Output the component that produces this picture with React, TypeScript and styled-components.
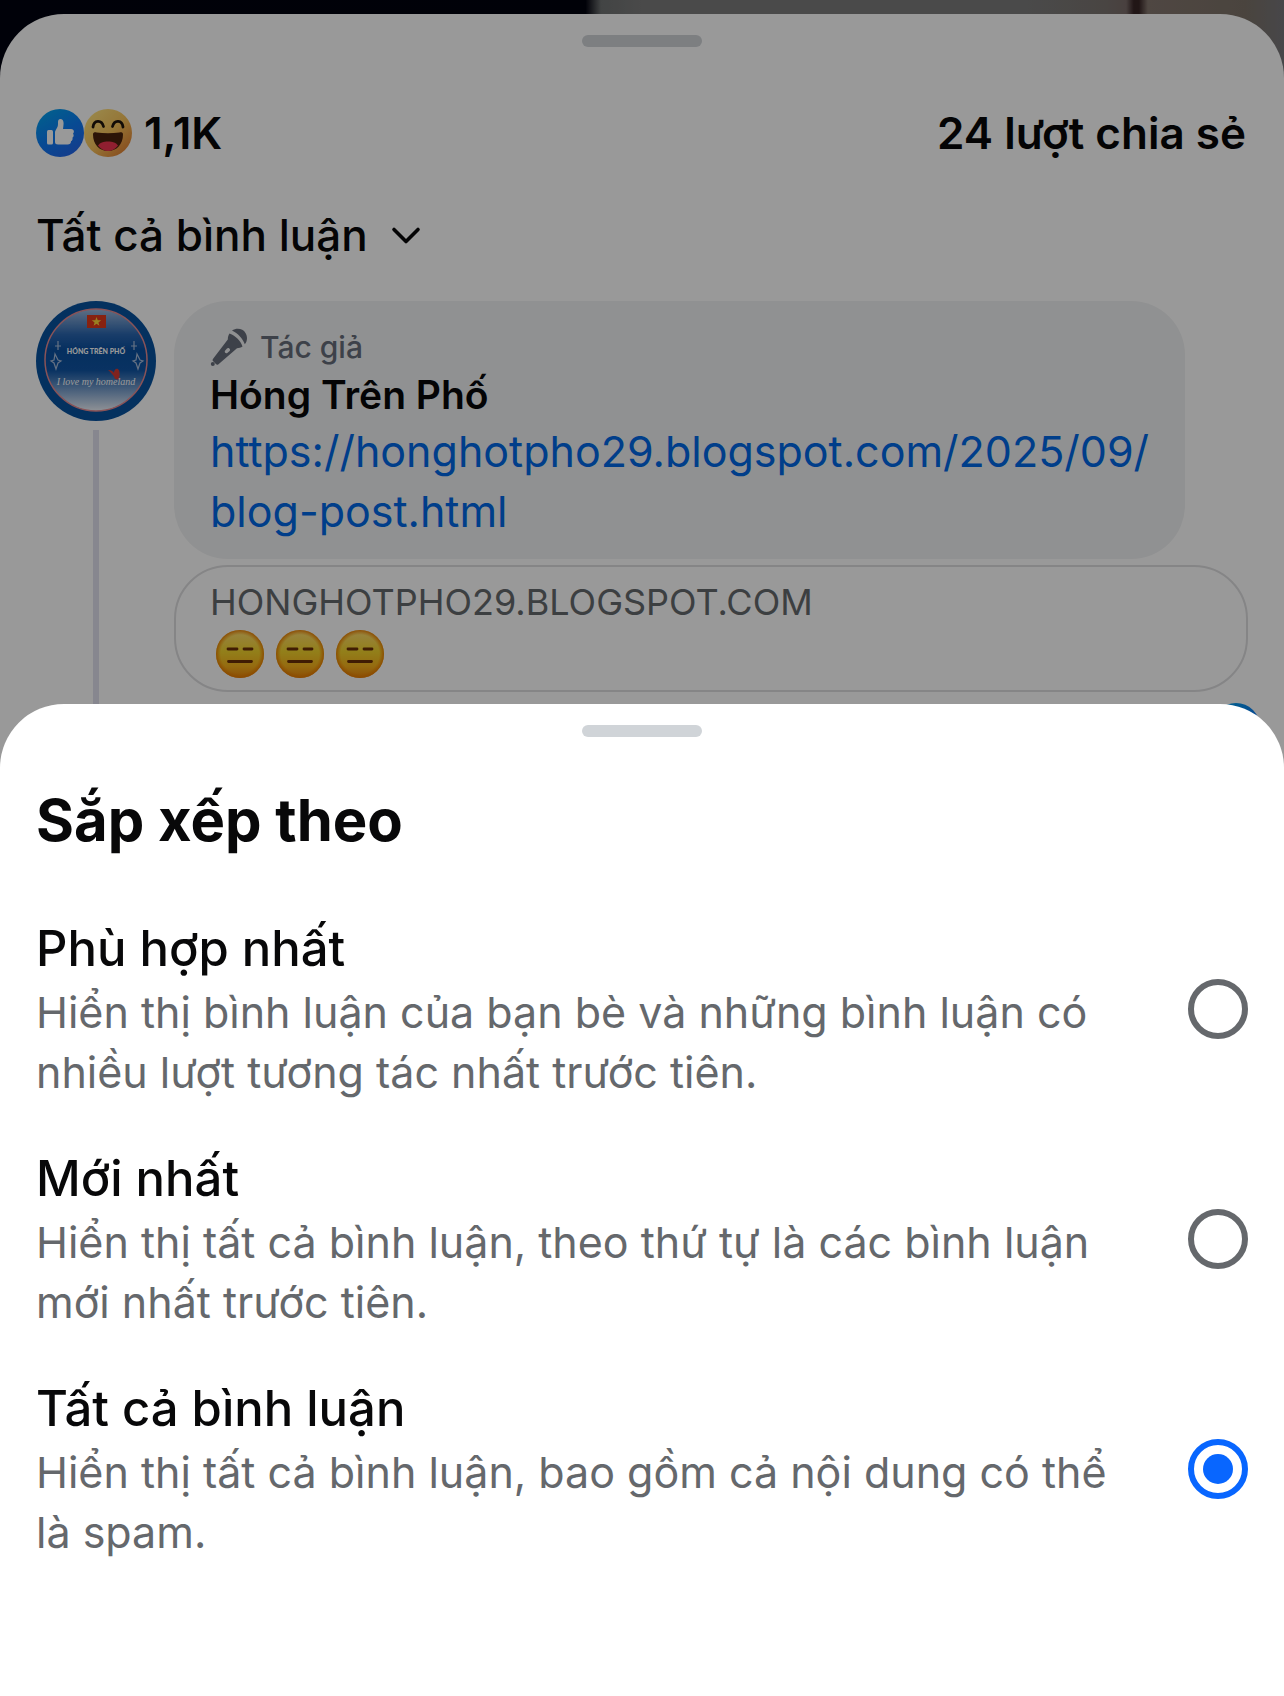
import React, { useId, useState } from "react";
import styled, { createGlobalStyle } from "styled-components";

const GlobalStyle = createGlobalStyle`
  * { box-sizing: border-box; }
  body {
    margin: 0;
    font-family: Inter, "Liberation Sans", sans-serif;
    color: #080809;
    background: #fff;
  }
  h2, p { margin: 0; }
`;

const Screen = styled.div`
  display: grid;
  grid-template: minmax(0, 1fr) / minmax(0, 1fr);
  min-height: 100vh;
  overflow: hidden;
`;

const CommentsLayer = styled.div`
  grid-area: 1 / 1;
  height: 0;
  min-height: 100%;
  overflow: hidden;
  padding-top: 14px;
  background: linear-gradient(
    90deg,
    #00030f 0%,
    #01020e 45.6%,
    #6f7272 46.8%,
    #7c7c7c 50%,
    #7c7c7c 80%,
    #7b7470 86%,
    #7a6c6a 87.7%,
    #382526 88.3%,
    #382526 88.7%,
    #84776f 89.4%,
    #7c7268 97%,
    #77777b 100%
  );
`;

const Sheet = styled.section`
  display: flex;
  flex-direction: column;
  width: 100%;
  padding: 21px 36px 0;
  background: #fff;
  border-radius: 64px 64px 0 0;
`;

const CommentsSheet = styled(Sheet)`
  min-height: 100%;
`;

const Handle = styled.div`
  align-self: center;
  width: 120px;
  height: 12px;
  border-radius: 6px;
  background: #d0d4d8;
`;

const Summary = styled.div`
  display: flex;
  align-items: center;
  justify-content: space-between;
  margin-top: 56px;
  padding-right: 2px;
  font-size: 44px;
  font-weight: 600;
  line-height: 60px;
`;

const Reactions = styled.div`
  display: flex;
  align-items: center;
`;

const Count = styled.span`
  margin-left: 12px;
`;

const SortButton = styled.button`
  display: flex;
  align-items: center;
  align-self: flex-start;
  gap: 22px;
  margin-top: 42px;
  padding: 0;
  border: 0;
  background: none;
  color: inherit;
  font: 500 44px/60px Inter, "Liberation Sans", sans-serif;
`;

const Comment = styled.article`
  display: flex;
  flex: 1;
  gap: 18px;
  margin-top: 36px;
`;

const AvatarColumn = styled.div`
  display: flex;
  flex: none;
  flex-direction: column;
  align-items: center;
  gap: 9px;
`;

const ThreadLine = styled.div`
  flex: 1;
  width: 6px;
  background: #e2e2ee;
`;

const CommentBody = styled.div`
  display: flex;
  flex: 1;
  min-width: 0;
  flex-direction: column;
`;

const Bubble = styled.div`
  align-self: flex-start;
  padding: 24px 36px 18px;
  border-radius: 54px;
  background: #f1f2f3;
`;

const AuthorTag = styled.div`
  display: flex;
  align-items: center;
  gap: 12px;
  color: #676d7a;
  font-size: 30px;
  font-weight: 500;
  line-height: 44px;
`;

const AuthorName = styled.div`
  font-size: 39px;
  font-weight: 600;
  line-height: 52px;
`;

const CommentLink = styled.a`
  display: block;
  color: #0068e6;
  font-size: 43px;
  line-height: 60px;
  text-decoration: none;
`;

const Preview = styled.a`
  display: block;
  margin-top: 6px;
  padding: 12px 34px;
  border: 2px solid #dedee0;
  border-radius: 54px;
  color: #65696d;
  font-size: 36px;
  line-height: 46px;
  text-decoration: none;
`;

const EmojiRow = styled.div`
  display: flex;
  gap: 12px;
  padding: 5px 6px 0;
`;

const CommentFooter = styled.div`
  display: flex;
  justify-content: flex-end;
  margin: 11px -12px 0 0;
`;

const Scrim = styled.div`
  grid-area: 1 / 1;
  z-index: 1;
  display: flex;
  align-items: flex-end;
  background: rgba(0, 0, 0, 0.4);
`;

const SortSheet = styled(Sheet)`
  padding-bottom: 134px;
`;

const Title = styled.h2`
  margin-top: 47px;
  font-size: 58px;
  font-weight: 700;
  line-height: 72px;
`;

const Options = styled.div`
  display: flex;
  flex-direction: column;
  gap: 44px;
  margin-top: 60px;
`;

const Option = styled.label`
  display: flex;
  align-items: center;
  gap: 48px;
`;

const OptionText = styled.div`
  flex: 1;
  min-width: 0;
`;

const OptionTitle = styled.div`
  font-size: 49px;
  font-weight: 500;
  line-height: 66px;
`;

const OptionDescription = styled.p`
  color: #65686c;
  font-size: 43px;
  line-height: 60px;
`;

const Radio = styled.input`
  flex: none;
  appearance: none;
  width: 60px;
  height: 60px;
  margin: 0;
  padding: 9px;
  border: 6px solid #65686c;
  border-radius: 50%;
  background-clip: content-box;

  &:checked {
    border-color: #0866ff;
    background-color: #0866ff;
  }
`;

function LikeIcon() {
  const id = useId();
  return (
    <svg width="48" height="48" viewBox="0 0 48 48" aria-hidden="true">
      <defs>
        <linearGradient id={id} x1="0.2" y1="0" x2="0.8" y2="1">
          <stop offset="0" stopColor="#02a0ec" />
          <stop offset="0.5" stopColor="#0d7cf5" />
          <stop offset="1" stopColor="#2463e8" />
        </linearGradient>
      </defs>
      <circle cx="24" cy="24" r="24" fill={`url(#${id})`} />
      <rect x="11" y="21" width="6" height="14.5" rx="1.5" fill="#fff" />
      <path
        fill="#fff"
        d="M19 23.500c0-2.500 3-4.500 3-8.500v-2c0-2 1-3 2.300-3 2 0 3.300 1.600 3.300 4.200 0 2.200-.4 4-.6 5.800h8c1.800 0 2.900 1.100 2.900 2.600 0 1-.4 1.700-.9 2.100.6.600.8 1.400.6 2.200-.1.900-.6 1.500-1.200 1.800.3.700.3 1.400 0 2.100-.3.800-.8 1.200-1.400 1.500 0 2.100-1.300 3.200-3.300 3.200H22c-2 0-3-.8-3-2.500z"
      />
    </svg>
  );
}

function HahaIcon() {
  const id = useId();
  return (
    <svg width="48" height="48" viewBox="0 0 48 48" aria-hidden="true">
      <defs>
        <linearGradient id={id} x1="0.15" y1="0.1" x2="0.9" y2="0.9">
          <stop offset="0" stopColor="#ffe07a" />
          <stop offset="0.5" stopColor="#f8c45c" />
          <stop offset="1" stopColor="#e28032" />
        </linearGradient>
      </defs>
      <circle cx="24" cy="24" r="24" fill={`url(#${id})`} />
      <g fill="none" stroke="#1f150c" strokeWidth="2.800" strokeLinecap="round">
        <path d="M9 18c.8-7 8.500-8 10.500-.5" />
        <path d="M28.500 17.500c2-7.500 9.700-6.500 10.500.5" />
      </g>
      <path
        fill="#4a220d"
        d="M9 25.500c0-2 1.500-2.300 3.500-2.100 7.500 1 15.500 1 23 0 2-.2 3.500.1 3.500 2.100C39 35.500 32.500 42 24 42S9 35.500 9 25.500z"
      />
      <path fill="#f03550" d="M14 36.500c3-5.500 17-5.500 20 0C31.500 40 28 42 24 42s-7.500-2-10-5.500z" />
    </svg>
  );
}

function ExpressionlessFace() {
  const id = useId();
  return (
    <svg width="48" height="48" viewBox="0 0 48 48" aria-hidden="true">
      <defs>
        <linearGradient id={`${id}fill`} x1="0" y1="0" x2="0" y2="1">
          <stop offset="0" stopColor="#ffdc72" />
          <stop offset="0.45" stopColor="#f4d42c" />
          <stop offset="0.75" stopColor="#f8b31c" />
          <stop offset="1" stopColor="#e8820a" />
        </linearGradient>
        <radialGradient id={`${id}rim`}>
          <stop offset="0.8" stopColor="#ee8500" stopOpacity="0" />
          <stop offset="1" stopColor="#e67a00" stopOpacity="0.9" />
        </radialGradient>
      </defs>
      <circle cx="24" cy="24" r="24" fill={`url(#${id}fill)`} />
      <circle cx="24" cy="24" r="24" fill={`url(#${id}rim)`} />
      <path
        d="M12 19h9M28 19h8M12.500 31.500h23"
        fill="none"
        stroke="#6b2f06"
        strokeWidth="2.800"
        strokeLinecap="round"
      />
    </svg>
  );
}

function ChevronIcon() {
  return (
    <svg width="32" height="32" viewBox="0 0 32 32" aria-hidden="true">
      <path
        d="M4 10.500l12 12 12-12"
        fill="none"
        stroke="#080809"
        strokeWidth="3.600"
        strokeLinecap="round"
        strokeLinejoin="round"
      />
    </svg>
  );
}

function MicrophoneIcon() {
  return (
    <svg width="38" height="38" viewBox="0 0 38 38" aria-hidden="true">
      <g fill="#676d7a">
        <path d="M22 2.500C27-.5 33 .8 35.500 5c2.200 3.600 2 8-.7 11.300C32.500 10 28 5.500 22 2.500z" />
        <path
          fillRule="evenodd"
          d="M19.500 5.500C26 8 30.500 12.500 32.500 18.500c-1.500 1-3.500 1.600-5.500 1.700L8.500 36.200c-1 .8-1.800.7-2.600-.1l-2.700-2.800c-.8-.8-.8-1.600-.1-2.600L17.800 11.500c0-2.200.6-4.300 1.700-6zM17 20.500l-2 2.300c-1 1.300 1 3.300 2.300 2.200l2.300-2c1.600-1.500-1.200-4.200-2.600-2.500z"
        />
        <circle cx="2.800" cy="36" r="2" />
      </g>
    </svg>
  );
}

function PageAvatar() {
  const id = useId();
  return (
    <svg width="120" height="120" viewBox="0 0 120 120" role="img" aria-label="Hóng Trên Phố">
      <defs>
        <linearGradient id={id} x1="0" y1="0" x2="0" y2="1">
          <stop offset="0" stopColor="#9db9dc" />
          <stop offset="0.25" stopColor="#2a66b0" />
          <stop offset="0.4" stopColor="#0a4f9f" />
          <stop offset="0.6" stopColor="#0f54a3" />
          <stop offset="0.8" stopColor="#7da2cf" />
          <stop offset="1" stopColor="#eef3fa" />
        </linearGradient>
      </defs>
      <circle cx="60" cy="60" r="60" fill="#07529f" />
      <circle cx="60" cy="59" r="51" fill={`url(#${id})`} stroke="#e58a91" strokeWidth="1.500" />
      <rect x="51" y="14" width="19" height="13" fill="#e23a1c" />
      <path
        fill="#ffd83a"
        d="M60.500 16l1.200 3.300h3.500l-2.800 2.100 1 3.400-2.900-2-2.900 2 1-3.400-2.800-2.100h3.500z"
      />
      <g fill="none" stroke="#a9bddb" strokeWidth="1.200">
        <path d="M19 53l3 6 3 1-3 2-2 6-2-6-3-2 3-1z" />
        <path d="M101 53l3 6 3 1-3 2-2 6-2-6-3-2 3-1z" />
        <path d="M22 40v9M19 45h6M98 40v9M95 45h6" />
      </g>
      <text
        x="60"
        y="53"
        textAnchor="middle"
        fill="#fff"
        fontFamily="Lato, sans-serif"
        fontSize="7"
        fontWeight="900"
      >
        HÓNG TRÊN PHỐ
      </text>
      <path
        fill="#d63a33"
        d="M72 69c3 0 5 1 6 3 0-3 2-5 4-4 2 2 2 6 1 9l1 2-5-1c-1-4-4-6-7-9z"
      />
      <text
        x="60"
        y="84"
        textAnchor="middle"
        fill="#fff"
        fontFamily="'Liberation Serif', serif"
        fontSize="10"
        fontStyle="italic"
      >
        I love my homeland
      </text>
    </svg>
  );
}

const options = [
  {
    id: "relevant",
    title: "Phù hợp nhất",
    description:
      "Hiển thị bình luận của bạn bè và những bình luận có nhiều lượt tương tác nhất trước tiên.",
  },
  {
    id: "newest",
    title: "Mới nhất",
    description: "Hiển thị tất cả bình luận, theo thứ tự là các bình luận mới nhất trước tiên.",
  },
  {
    id: "all",
    title: "Tất cả bình luận",
    description: "Hiển thị tất cả bình luận, bao gồm cả nội dung có thể là spam.",
  },
];

export default function App() {
  const [selected, setSelected] = useState("all");

  return (
    <>
      <GlobalStyle />
      <Screen>
        <CommentsLayer>
          <CommentsSheet>
            <Handle />
            <Summary>
              <Reactions>
                <LikeIcon />
                <HahaIcon />
                <Count>1,1K</Count>
              </Reactions>
              <span>24 lượt chia sẻ</span>
            </Summary>
            <SortButton type="button">
              Tất cả bình luận
              <ChevronIcon />
            </SortButton>
            <Comment>
              <AvatarColumn>
                <PageAvatar />
                <ThreadLine />
              </AvatarColumn>
              <CommentBody>
                <Bubble>
                  <AuthorTag>
                    <MicrophoneIcon />
                    Tác giả
                  </AuthorTag>
                  <AuthorName>Hóng Trên Phố</AuthorName>
                  <CommentLink href="https://honghotpho29.blogspot.com/2025/09/blog-post.html">
                    https://honghotpho29.blogspot.com/2025/09/
                    <br />
                    blog-post.html
                  </CommentLink>
                </Bubble>
                <Preview href="https://honghotpho29.blogspot.com/2025/09/blog-post.html">
                  HONGHOTPHO29.BLOGSPOT.COM
                  <EmojiRow>
                    <ExpressionlessFace />
                    <ExpressionlessFace />
                    <ExpressionlessFace />
                  </EmojiRow>
                </Preview>
                <CommentFooter>
                  <LikeIcon />
                </CommentFooter>
              </CommentBody>
            </Comment>
          </CommentsSheet>
        </CommentsLayer>
        <Scrim>
          <SortSheet>
            <Handle />
            <Title>Sắp xếp theo</Title>
            <Options role="radiogroup" aria-label="Sắp xếp theo">
              {options.map((option) => (
                <Option key={option.id} htmlFor={option.id}>
                  <OptionText>
                    <OptionTitle>{option.title}</OptionTitle>
                    <OptionDescription>{option.description}</OptionDescription>
                  </OptionText>
                  <Radio
                    type="radio"
                    name="comment-sort"
                    id={option.id}
                    checked={selected === option.id}
                    onChange={() => setSelected(option.id)}
                  />
                </Option>
              ))}
            </Options>
          </SortSheet>
        </Scrim>
      </Screen>
    </>
  );
}
